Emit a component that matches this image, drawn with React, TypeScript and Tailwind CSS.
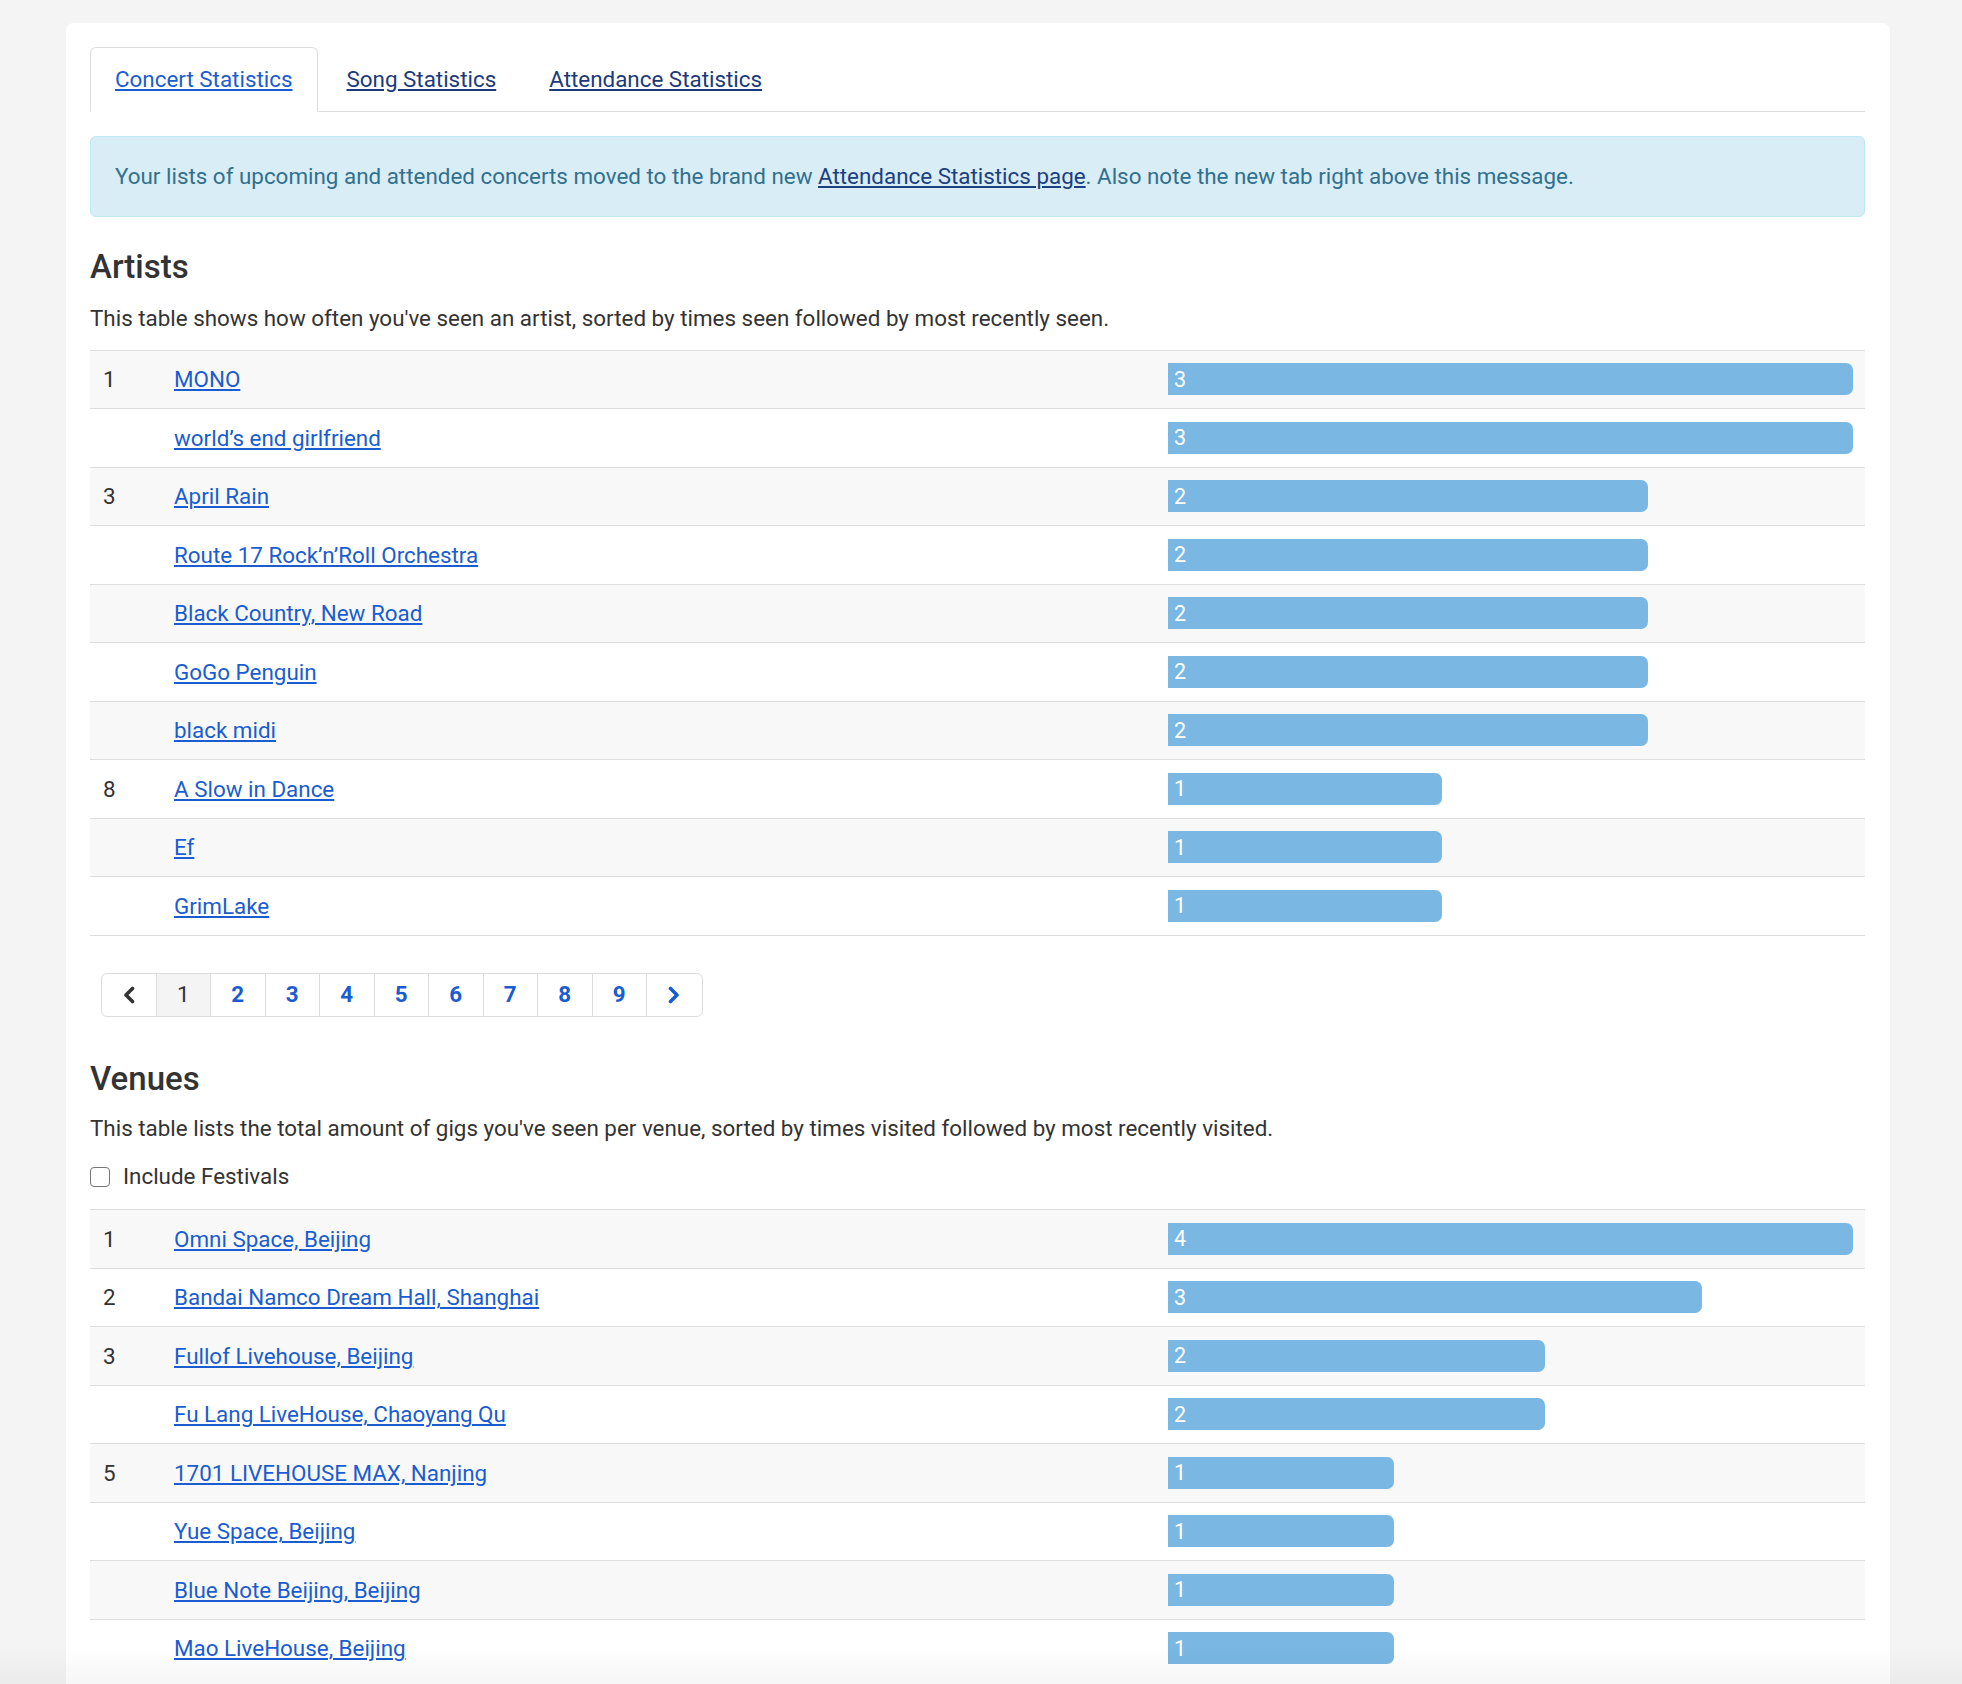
import React from "react";

type Row = { rank?: number; name: string; count: number };

const artists: Row[] = [
  { rank: 1, name: "MONO", count: 3 },
  { name: "world\u2019s end girlfriend", count: 3 },
  { rank: 3, name: "April Rain", count: 2 },
  { name: "Route 17 Rock\u2019n\u2019Roll Orchestra", count: 2 },
  { name: "Black Country, New Road", count: 2 },
  { name: "GoGo Penguin", count: 2 },
  { name: "black midi", count: 2 },
  { rank: 8, name: "A Slow in Dance", count: 1 },
  { name: "Ef", count: 1 },
  { name: "GrimLake", count: 1 },
];

const venues: Row[] = [
  { rank: 1, name: "Omni Space, Beijing", count: 4 },
  { rank: 2, name: "Bandai Namco Dream Hall, Shanghai", count: 3 },
  { rank: 3, name: "Fullof Livehouse, Beijing", count: 2 },
  { name: "Fu Lang LiveHouse, Chaoyang Qu", count: 2 },
  { rank: 5, name: "1701 LIVEHOUSE MAX, Nanjing", count: 1 },
  { name: "Yue Space, Beijing", count: 1 },
  { name: "Blue Note Beijing, Beijing", count: 1 },
  { name: "Mao LiveHouse, Beijing", count: 1 },
];

function StatTable({ rows, bottomBorder, widths }: { rows: Row[]; bottomBorder: boolean; widths: Record<number, number> }) {
  return (
    <div className={bottomBorder ? "border-b border-[#dddddd]" : ""}>
      {rows.map((r, i) => (
        <div
          key={i}
          className={`flex items-center h-[58.5px] border-t border-[#dddddd] ${
            i % 2 === 0 ? "bg-[#f8f8f8]" : "bg-white"
          }`}
        >
          <div className="w-[73px] pl-[13px] pt-[1px] text-[#333333]">{r.rank ?? ""}</div>
          <div className="w-[994px] px-[11px] pt-[1px]">
            <a href="#" className="text-[#1a5dd0] underline">
              {r.name}
            </a>
          </div>
          <div className="flex-1 pl-[11px] pr-[12px]">
            <div
              className="h-[32px] bg-[#7ab7e3] rounded-r-[7px] flex items-center pl-[6px] text-white text-[21.5px] leading-none"
              style={{ width: `${widths[r.count]}%` }}
            >
              {r.count}
            </div>
          </div>
        </div>
      ))}
    </div>
  );
}

function Chevron({ dir, color }: { dir: "left" | "right"; color: string }) {
  return (
    <svg width="14" height="18" viewBox="0 0 14 18" fill="none">
      <polyline
        points={dir === "left" ? "10.5,2.5 4,9 10.5,15.5" : "3.5,2.5 10,9 3.5,15.5"}
        stroke={color}
        strokeWidth="3.6"
        strokeLinecap="round"
        strokeLinejoin="round"
      />
    </svg>
  );
}

function Pagination() {
  const pages = [1, 2, 3, 4, 5, 6, 7, 8, 9];
  return (
    <div className="ml-[11px] mt-[37.5px] inline-flex border border-[#dddddd] rounded-[6px] overflow-hidden divide-x divide-[#dddddd]">
      <div className="w-[54.5px] h-[41.5px] flex items-center justify-center">
        <Chevron dir="left" color="#333333" />
      </div>
      {pages.map((p) => (
        <div
          key={p}
          className={`w-[54.5px] h-[41.5px] flex items-center justify-center ${
            p === 1 ? "bg-[#f4f4f4] text-[#333333] font-normal" : "text-[#1a5dd0] font-bold"
          }`}
        >
          {p}
        </div>
      ))}
      <div className="w-[54.5px] h-[41.5px] flex items-center justify-center">
        <Chevron dir="right" color="#1a5dd0" />
      </div>
    </div>
  );
}

export default function App() {
  return (
    <div className="min-h-screen bg-[#f4f4f4] pt-[23px] font-['Roboto',sans-serif] text-[22.4px] leading-[33px] text-[#333333]">
      <div className="ml-[66px] w-[1824px] bg-white rounded-[8px] pt-[24px] pl-[24px] pr-[25px] pb-[40px]">
        {/* Tabs */}
        <div className="flex border-b border-[#dddddd]">
          <div className="-mb-[1px] h-[65px] px-[24px] flex items-center border border-[#dddddd] border-b-white bg-white rounded-t-[6px]">
            <a href="#" className="text-[#1a5dd0] underline">
              Concert Statistics
            </a>
          </div>
          <div className="-mb-[1px] ml-[3px] h-[65px] px-[25px] flex items-center border border-transparent">
            <a href="#" className="text-[#1b3a7c] underline">
              Song Statistics
            </a>
          </div>
          <div className="-mb-[1px] ml-[1px] h-[65px] px-[25px] flex items-center border border-transparent">
            <a href="#" className="text-[#1b3a7c] underline">
              Attendance Statistics
            </a>
          </div>
        </div>

        {/* Alert */}
        <div className="mt-[24px] h-[81px] flex items-center px-[24px] bg-[#d9edf7] border border-[#bce8f1] rounded-[6px] text-[#31708f]">
          <span>
            Your lists of upcoming and attended concerts moved to the brand new{" "}
            <a href="#" className="text-[#1b3f80] underline">
              Attendance Statistics page
            </a>
            . Also note the new tab right above this message.
          </span>
        </div>

        {/* Artists */}
        <h4 className="mt-[30px] text-[33px] leading-[1.2] font-medium text-[#333333]">Artists</h4>
        <p className="mt-[15px]">
          This table shows how often you've seen an artist, sorted by times seen followed by most recently seen.
        </p>
        <div className="mt-[15px]">
          <StatTable rows={artists} bottomBorder widths={{ 1: 40, 2: 70, 3: 100 }} />
        </div>
        <Pagination />

        {/* Venues */}
        <h4 className="mt-[42px] text-[33px] leading-[1.2] font-medium text-[#333333]">Venues</h4>
        <p className="mt-[14px]">
          This table lists the total amount of gigs you've seen per venue, sorted by times visited followed by most
          recently visited.
        </p>
        <label className="mt-[15px] flex items-center">
          <span className="w-[20px] h-[20px] border-[1.5px] border-[#767676] rounded-[4px] bg-white" />
          <span className="ml-[13px]">Include Festivals</span>
        </label>
        <div className="mt-[16px]">
          <StatTable rows={venues} bottomBorder={false} widths={{ 1: 33, 2: 55, 3: 78, 4: 100 }} />
        </div>
      </div>
      <div className="fixed left-0 right-0 bottom-0 h-[38px] bg-linear-to-b from-transparent to-black/[0.035] pointer-events-none" />
    </div>
  );
}
